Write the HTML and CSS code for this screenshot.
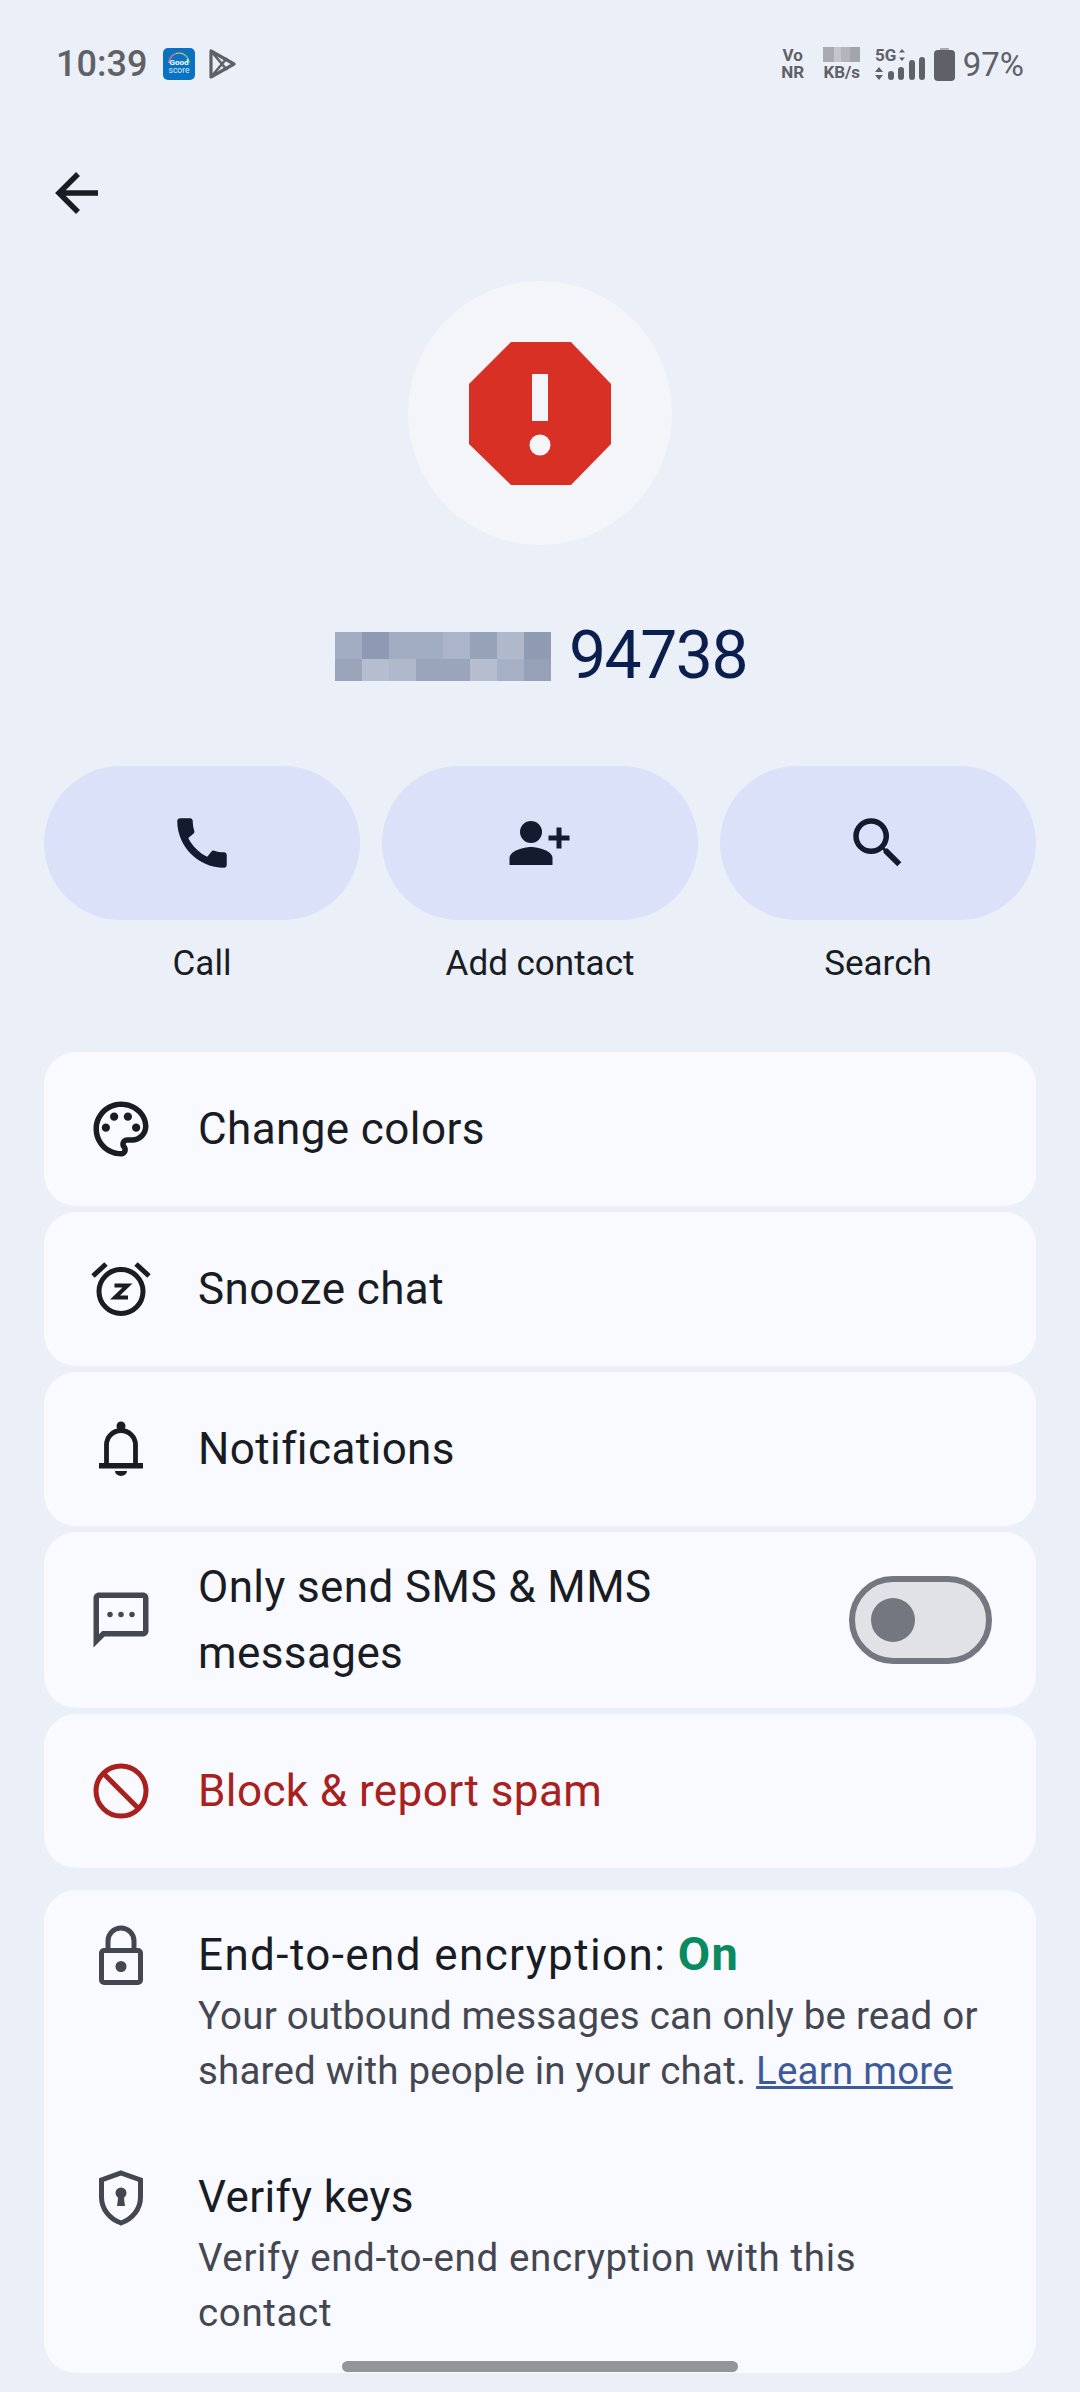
FILE: index.html
```html
<!DOCTYPE html>
<html>
<head>
  <title>Details</title>
  <link rel="stylesheet" href="styles.css">
</head>
<body>
  <div class="status">
    <div class="status-left">
      <span class="time">10:39</span>
      <svg class="app-icon" viewBox="0 0 32 32">
        <rect width="32" height="32" rx="5" fill="#0a72c2"/>
        <path d="M6 15a10 10 0 0 1 20 0" fill="none" stroke="#e9c94a" stroke-width="1.2"/>
        <path d="M6 15a10 10 0 0 1 7-9.500" fill="none" stroke="#d0569a" stroke-width="1.2"/>
        <path d="M21 6.500a10 10 0 0 1 5 8.500" fill="none" stroke="#52c07a" stroke-width="1.2"/>
        <text x="16" y="17" class="app-good">Good</text>
        <text x="16" y="25" class="app-score">score</text>
      </svg>
      <svg class="play-icon" viewBox="0 0 28 32" fill="none" stroke="#5f6166">
        <path d="M3 3v26l23-13z" stroke-width="3.200" stroke-linejoin="round"/>
        <path d="M3 3l16 19M3 29l16-19" stroke-width="2.600"/>
      </svg>
    </div>
    <div class="status-right">
      <div class="mini-stack vo"><span>Vo</span><span>NR</span></div>
      <div class="mini-stack speed">
        <svg class="speed-blur" viewBox="0 0 37 15">
          <rect width="11" height="15" fill="#a9abb1"/>
          <rect x="11" width="7" height="15" fill="#c4c6cb"/>
          <rect x="18" width="9" height="15" fill="#b3b5ba"/>
          <rect x="27" width="10" height="15" fill="#a3a5ab"/>
        </svg>
        <span>KB/s</span>
      </div>
      <svg class="signal" viewBox="0 0 52 34">
        <text x="0" y="14" class="signal-text">5G</text>
        <path d="M27 2l3 3.500h-6zM27 14l3-3.500h-6z" fill="#5f6166"/>
        <path d="M4 20l4 5H0zM4 33l4-5H0z" fill="#5f6166"/>
        <rect x="13" y="24" width="6" height="9" rx="3" fill="#5f6166"/>
        <rect x="23" y="20" width="6" height="13" rx="3" fill="#5f6166"/>
        <rect x="34" y="13" width="6" height="20" rx="3" fill="#5f6166"/>
        <rect x="44" y="10" width="6" height="23" rx="3" fill="#5f6166"/>
      </svg>
      <svg class="battery" viewBox="0 0 21 33">
        <rect x="6" width="9" height="3" fill="#a9abb1"/>
        <rect y="2" width="21" height="31" rx="4" fill="#5f6166"/>
      </svg>
      <span class="percent">97%</span>
    </div>
  </div>

  <div class="topbar">
    <svg class="icon" viewBox="0 0 66 66">
      <path d="M54 33H16M34 14L15 33l19 19" fill="none" stroke="#191c22" stroke-width="5.500"/>
    </svg>
  </div>

  <div class="avatar">
    <svg class="stop" viewBox="0 0 142 143">
      <path d="M42 0h60l40 42v60l-40 41H42L0 102V42z" fill="#d93025"/>
      <rect x="63" y="32" width="16" height="47" fill="#f3f5f8"/>
      <circle cx="71" cy="103" r="10.500" fill="#f3f5f8"/>
    </svg>
  </div>

  <div class="name">
    <svg class="blur" viewBox="0 0 216 49">
      <rect width="27" height="27" fill="#a3adc2"/>
      <rect x="27" width="27" height="27" fill="#8e9ab3"/>
      <rect x="54" width="54" height="27" fill="#a2adc1"/>
      <rect x="108" width="27" height="27" fill="#abb4c8"/>
      <rect x="135" width="27" height="27" fill="#96a2b8"/>
      <rect x="162" width="27" height="27" fill="#b0b9cc"/>
      <rect x="189" width="27" height="27" fill="#8f9bb3"/>
      <rect y="27" width="27" height="22" fill="#9aa5bb"/>
      <rect x="27" y="27" width="27" height="22" fill="#b5bdcf"/>
      <rect x="54" y="27" width="27" height="22" fill="#b0b9cc"/>
      <rect x="81" y="27" width="54" height="22" fill="#9aa5bb"/>
      <rect x="135" y="27" width="27" height="22" fill="#b5bdcf"/>
      <rect x="162" y="27" width="27" height="22" fill="#a6b0c4"/>
      <rect x="189" y="27" width="27" height="22" fill="#95a1b7"/>
    </svg>
    <span class="digits">94738</span>
  </div>

  <div class="actions">
    <div class="action">
      <div class="pill">
        <svg class="action-icon" viewBox="0 0 24 24"><path d="M20.010 15.380c-1.230 0-2.420-.2-3.530-.56a.977.977 0 0 0-1.010.24l-1.570 1.970c-2.830-1.350-5.480-3.900-6.890-6.830l1.950-1.660c.27-.28.35-.67.24-1.020-.37-1.110-.56-2.300-.56-3.530 0-.54-.45-.99-.99-.99H4.190C3.650 3 3 3.240 3 3.990 3 13.280 10.730 21 20.010 21c.71 0 .99-.63.99-1.180v-3.450c0-.54-.45-.99-.99-.99z"/></svg>
      </div>
      <span class="action-label">Call</span>
    </div>
    <div class="action">
      <div class="pill">
        <svg class="action-icon" viewBox="0 0 66 66">
          <circle cx="24" cy="22" r="11"/>
          <path d="M2.500 55v-7c0-7 14-11 21.500-11s21.500 4 21.500 11v7z"/>
          <path d="M41.500 28h21M52 17.500v21" fill="none" stroke="#151b2e" stroke-width="5"/>
        </svg>
      </div>
      <span class="action-label">Add contact</span>
    </div>
    <div class="action">
      <div class="pill">
        <svg class="action-icon" viewBox="0 0 24 24"><path d="M15.500 14h-.79l-.28-.27A6.471 6.471 0 0 0 16 9.500 6.500 6.500 0 1 0 9.500 16c1.610 0 3.090-.59 4.230-1.570l.27.28v.79l5 4.990L20.490 19l-4.990-5zm-6 0C7.010 14 5 11.990 5 9.500S7.010 5 9.500 5 14 7.010 14 9.500 11.990 14 9.500 14z"/></svg>
      </div>
      <span class="action-label">Search</span>
    </div>
  </div>

  <div class="list">
    <div class="row">
      <svg class="icon" viewBox="0 0 24 24" fill="#191c22">
        <path d="M12 22C6.490 22 2 17.510 2 12S6.490 2 12 2s10 4.040 10 9c0 3.310-2.690 6-6 6h-1.770c-.28 0-.5.22-.5.5 0 .12.05.23.13.33.41.47.64 1.060.64 1.670 0 1.380-1.120 2.500-2.500 2.500zm0-18c-4.410 0-8 3.590-8 8s3.590 8 8 8c.28 0 .5-.22.5-.5 0-.16-.08-.28-.14-.35-.41-.46-.63-1.050-.63-1.650 0-1.380 1.120-2.500 2.500-2.500H16c2.210 0 4-1.790 4-4 0-3.860-3.590-7-8-7z"/>
        <circle cx="6.500" cy="11.500" r="1.500"/><circle cx="9.500" cy="7.500" r="1.500"/><circle cx="14.500" cy="7.500" r="1.500"/><circle cx="17.500" cy="11.500" r="1.500"/>
      </svg>
      <span class="row-text">Change colors</span>
    </div>
    <div class="row">
      <svg class="icon" viewBox="0 0 66 66" fill="none" stroke="#191c22" stroke-width="5">
        <circle cx="33" cy="35.500" r="22"/>
        <path d="M5 20L18 8M61 20L48 8"/>
        <path d="M26.500 29.500h13L27 41.500h13" stroke-width="4"/>
      </svg>
      <span class="row-text">Snooze chat</span>
    </div>
    <div class="row">
      <svg class="icon" viewBox="0 0 66 66">
        <path d="M18.500 49V29a14.500 14.500 0 0 1 29 0v20" fill="none" stroke="#191c22" stroke-width="4.800"/>
        <circle cx="33" cy="10" r="4.500" fill="#191c22"/>
        <rect x="11" y="47" width="44" height="5.500" fill="#191c22"/>
        <path d="M27 55h12a6 5 0 0 1-12 0z" fill="#191c22"/>
      </svg>
      <span class="row-text">Notifications</span>
    </div>
    <div class="row row-tall">
      <svg class="icon icon-grey" viewBox="0 0 24 24">
        <path d="M20 2H4c-1.100 0-2 .9-2 2v18l4-4h14c1.100 0 2-.9 2-2V4c0-1.100-.9-2-2-2zm0 14H5.170L4 17.170V4h16v12z"/>
        <circle cx="8" cy="10" r="1"/><circle cx="12" cy="10" r="1"/><circle cx="16" cy="10" r="1"/>
      </svg>
      <span class="row-text">Only send SMS &amp; MMS messages</span>
      <div class="toggle"><div class="knob"></div></div>
    </div>
    <div class="row">
      <svg class="icon" viewBox="0 0 66 66" fill="none" stroke="#a8211d" stroke-width="5">
        <circle cx="33" cy="33" r="25"/>
        <path d="M15 15l36 36"/>
      </svg>
      <span class="row-text row-danger">Block &amp; report spam</span>
    </div>
  </div>

  <div class="security">
    <div class="sec-item">
      <svg class="icon icon-grey sec-icon" viewBox="0 0 66 66">
        <path d="M20 25v-9a13 13 0 0 1 26 0v9" fill="none" stroke="#44474f" stroke-width="5"/>
        <rect x="13.500" y="25.500" width="39" height="32" rx="2.500" fill="none" stroke="#44474f" stroke-width="5"/>
        <circle cx="33" cy="41.500" r="5.500" fill="#44474f"/>
      </svg>
      <div class="sec-text">
        <div class="sec-title"><span class="wide-title">End-to-end encryption:</span> <b class="on">On</b></div>
        <div class="sec-sub">Your outbound messages can only be read or shared with people in your chat. <a class="learn">Learn more</a></div>
      </div>
    </div>
    <div class="sec-item">
      <svg class="icon icon-grey sec-icon" viewBox="0 0 66 66">
        <path d="M33 6l19.500 7v17c0 12-8 22-19.500 26C21.500 52 13.500 42 13.500 30V13z" fill="none" stroke="#44474f" stroke-width="5"/>
        <circle cx="33" cy="26" r="5.500" fill="#44474f"/>
        <path d="M30.500 28h5l1.500 11h-8z" fill="#44474f"/>
      </svg>
      <div class="sec-text">
        <div class="sec-title">Verify keys</div>
        <div class="sec-sub wide-sub">Verify end-to-end encryption with this contact</div>
      </div>
    </div>
  </div>

  <div class="nav-pill"></div>
</body>
</html>
```

FILE: styles.css
```css
body {
  margin: 0;
  width: 1080px;
  height: 2392px;
  overflow: hidden;
  position: relative;
  background: #ebeff7;
  color: #191c22;
  font-family: Roboto, "Noto Sans", sans-serif;
}

/* status bar */
.status {
  height: 128px;
  padding: 0 56px;
  display: flex;
  align-items: center;
  justify-content: space-between;
  color: #5f6166;
}

.status-left {
  display: flex;
  align-items: center;
}

.time {
  font-size: 36px;
  font-weight: 500;
  width: 107px;
}

.app-icon {
  width: 32px;
  height: 32px;
}

.app-good {
  font: 700 8px Roboto, sans-serif;
  fill: #fff;
  text-anchor: middle;
}

.app-score {
  font: 400 8.500px Roboto, sans-serif;
  fill: #dbe9f7;
  text-anchor: middle;
}

.play-icon {
  width: 28px;
  height: 32px;
  margin-left: 13px;
}

.status-right {
  display: flex;
  align-items: center;
}

.mini-stack {
  display: flex;
  flex-direction: column;
  align-items: center;
  font-size: 17px;
  font-weight: 700;
  line-height: 17px;
}

.vo {
  width: 24px;
}

.speed {
  width: 38px;
  margin-left: 18px;
}

.speed-blur {
  width: 37px;
  height: 15px;
  margin-bottom: 2px;
}

.signal {
  width: 52px;
  height: 34px;
  margin-left: 14px;
  overflow: visible;
}

.signal-text {
  font: 700 17px Roboto, sans-serif;
  fill: #5f6166;
}

.battery {
  width: 21px;
  height: 33px;
  margin-left: 7px;
}

.percent {
  font-size: 33px;
  margin-left: 8px;
}

/* header */
.topbar {
  margin-top: 32px;
  padding-left: 44px;
  height: 66px;
}

.icon {
  width: 66px;
  height: 66px;
  flex: none;
}

.icon-grey {
  fill: #44474f;
}

.avatar {
  width: 264px;
  height: 264px;
  margin: 55px auto 0;
  border-radius: 50%;
  background: #f3f5f8;
  display: flex;
  align-items: center;
  justify-content: center;
}

.stop {
  width: 142px;
  height: 143px;
}

.name {
  margin-top: 79px;
  height: 64px;
  padding-left: 2px;
  display: flex;
  align-items: center;
  justify-content: center;
  gap: 18px;
}

.blur {
  width: 216px;
  height: 49px;
}

.digits {
  font-size: 66px;
  line-height: 64px;
  letter-spacing: -1.500px;
  color: #0b1f4f;
}

/* call / add / search */
.actions {
  margin-top: 78px;
  padding: 0 44px;
  display: flex;
  gap: 22px;
}

.action {
  flex: 1;
  display: flex;
  flex-direction: column;
  align-items: center;
}

.pill {
  width: 100%;
  height: 154px;
  border-radius: 77px;
  background: #dbe1f9;
  display: flex;
  align-items: center;
  justify-content: center;
}

.action-icon {
  width: 66px;
  height: 66px;
  fill: #151b2e;
}

.action-label {
  margin-top: 21px;
  font-size: 35px;
  line-height: 46px;
}

/* settings list */
.list {
  margin: 65px 44px 0;
  display: flex;
  flex-direction: column;
  gap: 6px;
}

.row {
  height: 154px;
  box-sizing: border-box;
  padding: 0 44px;
  background: #f8faff;
  border-radius: 32px;
  display: flex;
  align-items: center;
  gap: 44px;
}

.row-tall {
  height: 176px;
}

.row-text {
  font-size: 44px;
  line-height: 66px;
  letter-spacing: .4px;
  flex: 1;
}

.row-danger {
  color: #a8211d;
}

.toggle {
  width: 143px;
  height: 88px;
  box-sizing: border-box;
  border: 6px solid #74777f;
  border-radius: 44px;
  background: #e1e2e6;
  display: flex;
  align-items: center;
  padding-left: 16px;
  flex: none;
}

.knob {
  width: 44px;
  height: 44px;
  border-radius: 50%;
  background: #74777f;
}

/* encryption card */
.security {
  margin: 22px 44px 0;
  padding: 35px 44px 33px;
  background: #f8faff;
  border-radius: 32px;
  display: flex;
  flex-direction: column;
  gap: 69px;
}

.sec-item {
  display: flex;
  gap: 44px;
}

.sec-text {
  flex: 1;
}

.sec-title {
  font-size: 44px;
  line-height: 60px;
  letter-spacing: .4px;
}

.wide-title {
  letter-spacing: 1.400px;
}

.on {
  color: #0b8a5f;
  font-size: 47px;
  line-height: 50px;
  font-weight: 700;
  letter-spacing: 1.500px;
}

.sec-sub {
  margin-top: 3px;
  font-size: 38.500px;
  line-height: 55px;
  letter-spacing: .2px;
  color: #44474f;
}

.wide-sub {
  letter-spacing: .64px;
}

.learn {
  color: #3f5a98;
  text-decoration: underline;
}

.nav-pill {
  position: absolute;
  left: 342px;
  top: 2361px;
  width: 396px;
  height: 11px;
  border-radius: 6px;
  background: #939598;
}
```
